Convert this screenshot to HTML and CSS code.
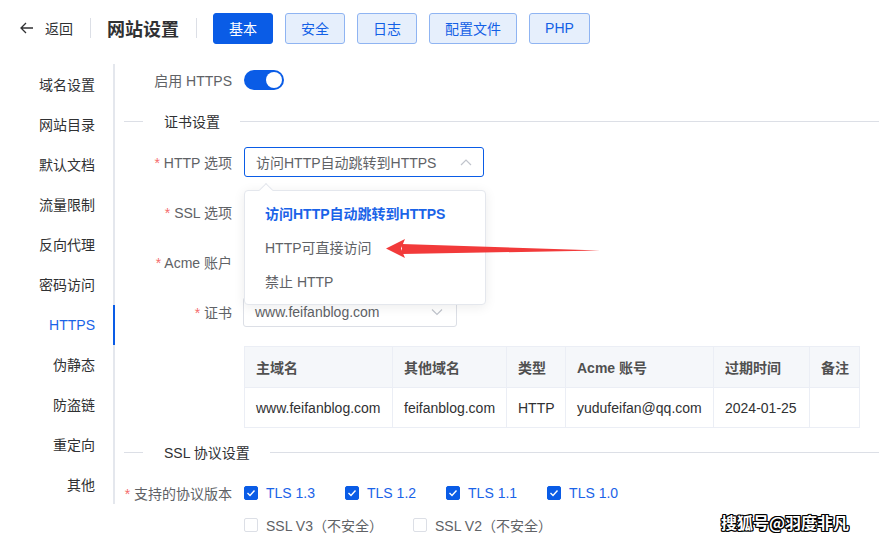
FILE: index.html
```html
<!DOCTYPE html>
<html lang="zh">
<head>
<meta charset="utf-8">
<link rel="stylesheet" href="styles.css">
</head>
<body>
<header class="topbar">
  <span class="back"><svg width="14" height="12" viewBox="0 0 14 12"><path d="M13 6H1.5M6 1L1 6l5 5" fill="none" stroke="#303133" stroke-width="1.3"/></svg><span class="back-text">返回</span></span>
  <span class="vsep"></span>
  <span class="title">网站设置</span>
  <span class="vsep"></span>
  <nav class="tabs">
    <span class="tab active">基本</span>
    <span class="tab">安全</span>
    <span class="tab">日志</span>
    <span class="tab wide">配置文件</span>
    <span class="tab php">PHP</span>
  </nav>
</header>
<div class="main">
  <aside class="side">
    <div class="side-item">域名设置</div>
    <div class="side-item">网站目录</div>
    <div class="side-item">默认文档</div>
    <div class="side-item">流量限制</div>
    <div class="side-item">反向代理</div>
    <div class="side-item">密码访问</div>
    <div class="side-item current">HTTPS</div>
    <div class="side-item">伪静态</div>
    <div class="side-item">防盗链</div>
    <div class="side-item">重定向</div>
    <div class="side-item">其他</div>
  </aside>
  <section class="content">
    <div class="row first">
      <label class="lbl">启用 HTTPS</label>
      <span class="switch"><span class="knob"></span></span>
    </div>
    <div class="divider"><span class="dline short"></span><span class="dtext">证书设置</span><span class="dline long"></span></div>
    <div class="row field http">
      <label class="lbl"><i>*</i> HTTP 选项</label>
      <div class="select focus">
        <span>访问HTTP自动跳转到HTTPS</span>
        <svg width="12" height="8" viewBox="0 0 12 8"><path d="M1 7l5-5 5 5" fill="none" stroke="#c0c4cc" stroke-width="1.2"/></svg>
      </div>
      <div class="dropdown">
        <span class="notch"></span>
        <div class="opt selected">访问HTTP自动跳转到HTTPS</div>
        <div class="opt">HTTP可直接访问</div>
        <div class="opt">禁止 HTTP</div>
      </div>
    </div>
    <div class="row field">
      <label class="lbl"><i>*</i> SSL 选项</label>
      <div class="select"><span></span></div>
    </div>
    <div class="row field">
      <label class="lbl"><i>*</i> Acme 账户</label>
      <div class="select"><span></span></div>
    </div>
    <div class="row field">
      <label class="lbl"><i>*</i> 证书</label>
      <div class="select cert">
        <span class="val">www.feifanblog.com</span>
        <svg width="12" height="8" viewBox="0 0 12 8"><path d="M1 1.5l5 5 5-5" fill="none" stroke="#c0c4cc" stroke-width="1.2"/></svg>
      </div>
    </div>
    <table class="tbl">
      <colgroup><col style="width:148px"><col style="width:114px"><col style="width:59px"><col style="width:148px"><col style="width:96px"><col style="width:50px"></colgroup>
      <thead><tr><th>主域名</th><th>其他域名</th><th>类型</th><th>Acme 账号</th><th>过期时间</th><th>备注</th></tr></thead>
      <tbody><tr><td>www.feifanblog.com</td><td>feifanblog.com</td><td>HTTP</td><td>yudufeifan@qq.com</td><td>2024-01-25</td><td></td></tr></tbody>
    </table>
    <div class="divider second"><span class="dline short"></span><span class="dtext">SSL 协议设置</span><span class="dline long"></span></div>
    <div class="row proto">
      <label class="lbl"><i>*</i> 支持的协议版本</label>
      <div class="checks">
        <span class="chk on"><span class="box"><svg width="10" height="8" viewBox="0 0 10 8"><path d="M1.5 4l2.5 2.5L8.5 1.5" fill="none" stroke="#fff" stroke-width="1.4"/></svg></span>TLS 1.3</span>
        <span class="chk on"><span class="box"><svg width="10" height="8" viewBox="0 0 10 8"><path d="M1.5 4l2.5 2.5L8.5 1.5" fill="none" stroke="#fff" stroke-width="1.4"/></svg></span>TLS 1.2</span>
        <span class="chk on"><span class="box"><svg width="10" height="8" viewBox="0 0 10 8"><path d="M1.5 4l2.5 2.5L8.5 1.5" fill="none" stroke="#fff" stroke-width="1.4"/></svg></span>TLS 1.1</span>
        <span class="chk on"><span class="box"><svg width="10" height="8" viewBox="0 0 10 8"><path d="M1.5 4l2.5 2.5L8.5 1.5" fill="none" stroke="#fff" stroke-width="1.4"/></svg></span>TLS 1.0</span>
      </div>
    </div>
    <div class="row proto2">
      <span class="lbl"></span>
      <div class="checks">
        <span class="chk"><span class="box"></span>SSL V3（不安全）</span>
        <span class="chk"><span class="box"></span>SSL V2（不安全）</span>
      </div>
    </div>
  </section>
</div>
<svg class="arrow" width="879" height="541" viewBox="0 0 879 541">
  <polygon points="600,250.5 402,254 402,244" fill="#f23a3a"/>
  <polygon points="386,248.5 405,239 401,248.5 405,258" fill="#f23a3a"/>
</svg>
<div class="watermark">搜狐号@羽度非凡</div>
</body>
</html>
```
FILE: styles.css
```css
* { box-sizing: border-box; }
html, body { margin: 0; padding: 0; }
body {
  width: 879px;
  height: 541px;
  overflow: hidden;
  background: #fff;
  font-family: "Liberation Sans", "Noto Sans CJK SC", sans-serif;
  font-size: 14px;
  color: #303133;
  position: relative;
}
.topbar {
  height: 56px;
  display: flex;
  align-items: center;
  padding-left: 20px;
}
.back { display: flex; align-items: center; color: #303133; }
.back svg { margin-right: 11px; }
.back-text { font-size: 14px; }
.vsep { width: 1px; height: 20px; background: #dcdfe6; margin: 0 16px 0 17px; }
.title { font-size: 18px; font-weight: bold; color: #303133; }
.tabs { display: flex; gap: 12px; }
.tab {
  width: 60px;
  height: 31px;
  display: flex;
  align-items: center;
  justify-content: center;
  border: 1px solid #8fb4f2;
  background: #e6effc;
  color: #1260e6;
  border-radius: 3px;
  font-size: 14px;
}
.tab.wide { width: 88px; }
.tab.php { width: 61px; }
.tab.active { background: #0a5ce6; border-color: #0a5ce6; color: #fff; }
.main { display: flex; margin-top: 8px; }
.side {
  width: 115px;
  border-right: 2px solid #e4e7ed;
  padding-top: 1px;
  height: 440px;
}
.side-item {
  height: 40px;
  line-height: 40px;
  text-align: right;
  padding-right: 18px;
  color: #303133;
  position: relative;
}
.side-item.current { color: #1a63e8; }
.side-item.current::after {
  content: "";
  position: absolute;
  right: -2px;
  top: 0;
  width: 2px;
  height: 40px;
  background: #0a5ce6;
}
.content { flex: 1; padding-left: 9px; }
.row { display: flex; align-items: center; position: relative; }
.row.first { height: 31px; }
.lbl {
  width: 120px;
  padding-right: 12px;
  text-align: right;
  color: #606266;
  flex-shrink: 0;
  white-space: nowrap;
}
.lbl i { font-style: normal; color: #f56c6c; }
.switch {
  width: 40px;
  height: 20px;
  border-radius: 10px;
  background: #0a5ce6;
  display: flex;
  align-items: center;
  justify-content: flex-end;
  padding-right: 2px;
}
.knob { width: 16px; height: 16px; border-radius: 50%; background: #fff; }
.divider { display: flex; align-items: center; height: 20px; margin-top: 16px; }
.divider.second { margin-top: 14px; }
.dline { height: 1px; background: #dcdfe6; }
.dline.short { width: 19px; }
.dline.long { flex: 1; }
.dtext { padding: 0 20px 0 21px; color: #303133; }
.field { height: 30px; margin-top: 20px; }
.field.http { margin-top: 16px; }
.select {
  width: 240px;
  height: 30px;
  border: 1px solid #dcdfe6;
  border-radius: 3px;
  display: flex;
  align-items: center;
  justify-content: space-between;
  padding: 0 11px 0 11px;
  color: #606266;
}
.select.focus { border-color: #0a5ce6; }
.select.cert { width: 214px; padding-right: 13px; margin-left: -1px; }
.dropdown {
  position: absolute;
  left: 120px;
  top: 43px;
  width: 242px;
  height: 115px;
  background: #fff;
  border: 1px solid #e4e7ed;
  border-radius: 4px;
  box-shadow: 0 2px 12px rgba(0,0,0,0.08);
  padding-top: 6px;
  z-index: 5;
}
.notch {
  position: absolute;
  top: -6px;
  left: 16px;
  width: 10px;
  height: 10px;
  background: #fff;
  border-left: 1px solid #e4e7ed;
  border-top: 1px solid #e4e7ed;
  transform: rotate(45deg);
}
.opt {
  height: 34px;
  line-height: 34px;
  padding-left: 20px;
  color: #606266;
  position: relative;
}
.opt.selected { color: #1a63e8; font-weight: bold; }
.tbl {
  margin-top: 19px;
  margin-left: 120px;
  border-collapse: collapse;
  table-layout: fixed;
  width: 615px;
}
.tbl th, .tbl td {
  border: 1px solid #ebeef5;
  text-align: left;
  padding: 0 0 0 11px;
  white-space: nowrap;
}
.tbl th { height: 41px; background: #f5f7fa; color: #505050; font-weight: bold; }
.tbl td { height: 40px; color: #303133; }
.proto { height: 30px; margin-top: 16px; }
.proto2 { height: 30px; margin-top: 2px; }
.checks { display: flex; gap: 30px; }
.chk { display: flex; align-items: center; color: #606266; }
.chk.on { color: #1a63e8; }
.box {
  width: 14px;
  height: 14px;
  border: 1px solid #dcdfe6;
  border-radius: 2px;
  margin-right: 8px;
  display: flex;
  align-items: center;
  justify-content: center;
  background: #fff;
}
.chk.on .box { background: #0a5ce6; border-color: #0a5ce6; }
.arrow { position: absolute; left: 0; top: 0; pointer-events: none; z-index: 10; }
.watermark {
  position: absolute;
  left: 721px;
  top: 510px;
  font-family: "Noto Sans CJK SC", sans-serif;
  font-weight: bold;
  font-size: 16px;
  color: #fff;
  text-shadow: -1px -1px 0 #000, 1px -1px 0 #000, -1px 1px 0 #000, 1px 1px 0 #000, 0 1px 0 #000, 0 -1px 0 #000, 1px 0 0 #000, -1px 0 0 #000;
  z-index: 11;
}
```
